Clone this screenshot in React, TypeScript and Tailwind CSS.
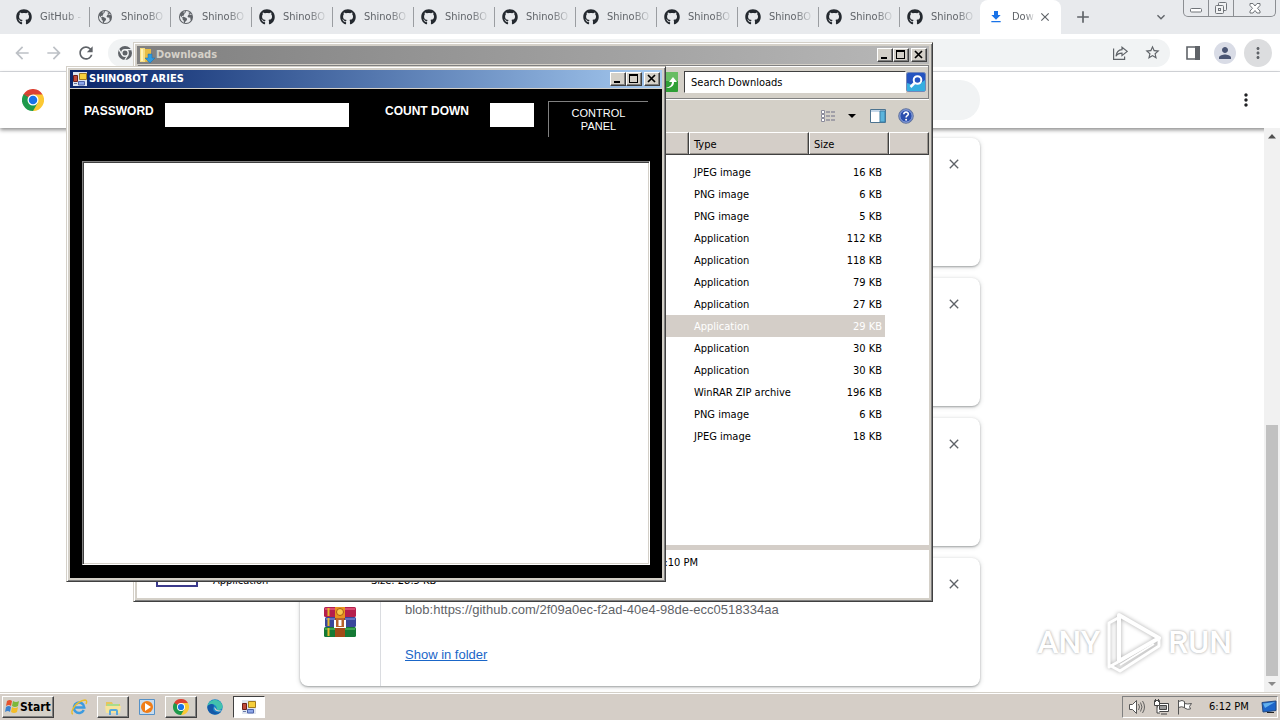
import type { ReactNode } from 'react'
import clsx from 'clsx'
import { FaGithub } from 'react-icons/fa'
import { IoEarth } from 'react-icons/io5'
import {
  MdAdd, MdArrowBack, MdArrowForward, MdClose, MdFileDownload, MdKeyboardArrowDown,
  MdMoreVert, MdPerson, MdRefresh, MdStarBorder,
} from 'react-icons/md'

const TABS = [
  { title: 'GitHub -', icon: 'github' },
  { title: 'ShinoBO', icon: 'globe' },
  { title: 'ShinoBO', icon: 'globe' },
  ...Array.from({ length: 9 }, () => ({ title: 'ShinoBO', icon: 'github' })),
]

const FILES = [
  { type: 'JPEG image', size: '16 KB' },
  { type: 'PNG image', size: '6 KB' },
  { type: 'PNG image', size: '5 KB' },
  { type: 'Application', size: '112 KB' },
  { type: 'Application', size: '118 KB' },
  { type: 'Application', size: '79 KB' },
  { type: 'Application', size: '27 KB' },
  { type: 'Application', size: '29 KB', selected: true },
  { type: 'Application', size: '30 KB' },
  { type: 'Application', size: '30 KB' },
  { type: 'WinRAR ZIP archive', size: '196 KB' },
  { type: 'PNG image', size: '6 KB' },
  { type: 'JPEG image', size: '18 KB' },
]

export default function App() {
  return (
    <div className="flex h-screen flex-col overflow-hidden bg-white font-['DejaVu_Sans_Condensed','Noto_Sans',sans-serif] text-[11px] text-black">
      <main className="relative flex min-h-0 flex-1 flex-col overflow-hidden">
        <Browser />
        <ExplorerWindow />
        <BotWindow />
        <Watermark />
      </main>
      <Taskbar />
    </div>
  )
}

/* ---------- browser ---------- */

const FADE = 'ml-2 whitespace-nowrap [mask-image:linear-gradient(to_right,#000_60%,rgba(0,0,0,0.15))]'

function Browser() {
  return (
    <>
      <div className="flex h-[34px] shrink-0 bg-[#e8eaed] pl-2 text-[#5f6368]">
        {TABS.map((tab, i) => (
          <button key={i} className={clsx('flex w-[81px] items-center pl-2', i > 0 && 'bg-[linear-gradient(#9a9da1,#9a9da1)] bg-[length:1px_20px] bg-left bg-no-repeat')}>
            {tab.icon === 'github' ? <FaGithub size={16} className="text-[#24292f]" /> : <IoEarth size={16} />}
            <span className={FADE}>{tab.title}</span>
          </button>
        ))}
        <button className="flex w-[81px] items-center rounded-t-lg bg-white pl-2">
          <MdFileDownload size={16} className="text-[#1a73e8]" />
          <span className={FADE}>Dow</span>
          <MdClose size={14} className="mr-[9px] ml-auto" />
        </button>
        <button aria-label="New tab" className="ml-3 flex items-center"><MdAdd size={20} /></button>
        <button aria-label="Search tabs" className="mr-[14px] ml-auto flex items-center"><MdKeyboardArrowDown size={16} /></button>
        <CaptionGlass />
      </div>

      <div className="flex h-[38px] shrink-0 items-center border-b border-[#dadce0] bg-white pr-2 text-[#5f6368]">
        <button aria-label="Back" className="ml-3 text-[#bdc1c6]"><MdArrowBack size={20} /></button>
        <button aria-label="Forward" className="ml-3 text-[#bdc1c6]"><MdArrowForward size={20} /></button>
        <button aria-label="Reload" className="ml-3"><MdRefresh size={20} /></button>
        <div className="ml-3 flex h-7 flex-1 items-center rounded-full bg-[#f1f3f4] px-[9px]">
          <svg viewBox="0 0 16 16" className="size-4">
            <circle cx="8" cy="8" r="7" fill="#5f6368" />
            <circle cx="8" cy="8" r="3.2" fill="#5f6368" stroke="#f1f3f4" strokeWidth="1.4" />
            <path d="M8 4.6h6.4M5 9.7 1.9 4.4M11 9.8 7.8 15" stroke="#f1f3f4" strokeWidth="1.2" />
          </svg>
          <button aria-label="Share" className="mr-4 ml-auto">
            <svg viewBox="0 0 16 16" className="size-4" fill="none" stroke="#5f6368" strokeWidth="1.2">
              <path d="M1.600 3.500v10.900h11v-3M10 2.200 15.200 6.400 10 10.600V8.200C7.500 8.200 5.300 9 4 11.200 4.400 7.600 6.200 4.900 10 4.600z" />
            </svg>
          </button>
          <button aria-label="Bookmark"><MdStarBorder size={17} /></button>
        </div>
        <button aria-label="Side panel" className="ml-4">
          <svg viewBox="0 0 14 14" className="size-[14px]"><path d="M1 1h12v12H1z" fill="#fff" stroke="#5f6368" strokeWidth="1.600" /><path d="M9 0h5v14H9z" fill="#5f6368" /></svg>
        </button>
        <button aria-label="Profile" className="ml-[14px] flex size-[22px] items-center justify-center rounded-full bg-[#d9dce6] text-[#4a5573]"><MdPerson size={18} /></button>
        <button aria-label="Menu" className="ml-2 flex size-7 items-center justify-center rounded-full bg-[#dcdddf]"><MdMoreVert size={18} /></button>
      </div>

      <div className="relative z-0 flex h-14 shrink-0 items-center bg-white shadow-[0_2px_4px_rgba(0,0,0,0.45)]">
        <ChromeLogo className="ml-[22px] size-[22px]" />
        <input aria-label="Search downloads" className="mx-auto h-10 w-[680px] rounded-full bg-[#f1f3f4] px-5 outline-none" />
        <button aria-label="More actions" className="mr-6 text-[#202124]"><MdMoreVert size={20} /></button>
      </div>

      <div className="flex min-h-0 flex-1 bg-white pl-4">
        <div className="flex flex-1 flex-col items-center gap-3 overflow-hidden pt-[10px]">
          <DownloadCard />
          <DownloadCard />
          <DownloadCard />
          <DownloadCard>
            <div className="flex w-[81px] shrink-0 justify-center border-r border-[#dadce0] pt-12"><WinRarIcon /></div>
            <div className="flex flex-col pt-11 pl-6 font-['Liberation_Sans',Arial,sans-serif] text-[13px] leading-4">
              <span className="text-[#5f6368]">blob:https://github.com/2f09a0ec-f2ad-40e4-98de-ecc0518334aa</span>
              <a href="#folder" className="mt-[29px] text-[#1a66c8] underline">Show in folder</a>
            </div>
          </DownloadCard>
        </div>
        <div className="relative z-0 flex w-4 flex-col items-center justify-between bg-[#f1f1f1]">
          <svg viewBox="0 0 16 16" className="size-4"><path d="M4 10.500 8 6l4 4.500z" fill="#505050" /></svg>
          <div className="mt-auto h-[251px] w-3 bg-[#c1c1c1]" />
          <svg viewBox="0 0 16 16" className="size-4"><path d="m4 6 4 4 4-4z" fill="#8a8a8a" /></svg>
        </div>
      </div>
    </>
  )
}

function DownloadCard({ children }: { children?: ReactNode }) {
  return (
    <article className="flex h-32 w-[680px] shrink-0 rounded-lg bg-white shadow-[0_1px_2px_rgba(60,64,67,0.4),0_1px_4px_1px_rgba(60,64,67,0.15)]">
      {children}
      <button aria-label="Remove" className="mt-[18px] mr-[18px] ml-auto size-4 text-[#5f6368]"><MdClose size={16} /></button>
    </article>
  )
}

function CaptionGlass() {
  return (
    <div className="mr-1 flex h-[17px] w-[93px] rounded-b-[5px] border border-t-0 border-[#8b8e92]">
      <button aria-label="Minimize" className="flex-1 border-r border-[#8b8e92]">
        <svg viewBox="0 0 24 16" className="h-4 w-full" fill="#fff" stroke="#707479"><rect x="6.500" y="8.500" width="11" height="3.500" rx="1" /></svg>
      </button>
      <button aria-label="Restore" className="flex-1 border-r border-[#8b8e92]">
        <svg viewBox="0 0 24 16" className="h-4 w-full" fill="#f1f2f3" stroke="#707479"><rect x="9.500" y="2.500" width="8" height="8" rx="1" /><rect x="6.500" y="5.500" width="8" height="8" rx="1" /><rect x="9.500" y="8.500" width="2" height="2" /></svg>
      </button>
      <button aria-label="Close" className="w-[41px]">
        <svg viewBox="0 0 40 16" className="h-4 w-full" fill="#fff" stroke="#707479"><path d="M15.500 3.500h3l2 2.500 2-2.500h3v2l-2.500 2.800 2.500 2.700v2h-3l-2-2.500-2 2.500h-3v-2L18 8.300l-2.500-2.800z" /></svg>
      </button>
    </div>
  )
}

/* ---------- classic windows ---------- */

const FRAME = 'absolute flex flex-col border border-t-[#d4d0c8] border-l-[#d4d0c8] border-r-[#404040] border-b-[#404040] bg-[#d4d0c8] p-[3px] shadow-[inset_1px_1px_0_#fff,inset_-1px_-1px_0_#808080]'
const RAISED = 'border border-t-white border-l-white border-r-[#404040] border-b-[#404040] bg-[#d4d0c8] shadow-[inset_-1px_-1px_0_#808080]'

function CaptionButtons() {
  return (
    <div className="ml-auto flex pr-[2px]">
      <button aria-label="Minimize" className={clsx(RAISED, 'h-[14px] w-4')}>
        <svg viewBox="0 0 14 12" className="h-3 w-[14px]"><path d="M3 8h6v2H3z" /></svg>
      </button>
      <button aria-label="Maximize" className={clsx(RAISED, 'h-[14px] w-4')}>
        <svg viewBox="0 0 14 12" className="h-3 w-[14px]"><path d="M2 1h9v9H2zM3 3v6h7V3z" fillRule="evenodd" /></svg>
      </button>
      <button aria-label="Close" className={clsx(RAISED, 'ml-[2px] h-[14px] w-4')}>
        <svg viewBox="0 0 14 12" className="h-3 w-[14px]"><path d="m3 2 7 7M10 2 3 9" stroke="#000" strokeWidth="1.700" /></svg>
      </button>
    </div>
  )
}

function ExplorerWindow() {
  return (
    <section className={clsx(FRAME, 'top-[42px] left-[133px] h-[560px] w-[800px]')}>
      <div className="mb-px flex h-[18px] shrink-0 items-center bg-linear-to-r from-[#808080] to-[#b8b8b8] pl-[2px] text-[#d4d0c8]">
        <svg viewBox="0 0 16 16" className="size-4">
          <path d="M1 1h5v14H1z" fill="#f6dd83" /><path d="M6 2h6v12l-6 1z" fill="#e8bd45" /><path d="M2 2h2v12H2z" fill="#fff3b8" />
          <path d="M9 7h4v4h3l-5 5-5-5h3z" fill="#2f9be0" stroke="#1b6fae" strokeWidth=".5" />
        </svg>
        <h2 className="ml-px pt-px font-bold">Downloads</h2>
        <CaptionButtons />
      </div>

      <div className="flex h-[34px] shrink-0 items-center justify-end border border-t-[#808080] border-r-[#808080] border-b-[#808080] border-l-white pr-[2px] shadow-[inset_0_1px_0_#fff,0_1px_0_#fff]">
        <button aria-label="Go" className="mr-[6px]">
          <svg viewBox="0 0 20 20" className="size-5"><rect width="20" height="20" rx="1" fill="#2f9f36" /><path d="M0 0h20v9H0z" fill="#68bd63" /><path d="M8 16c4-1 6-3 6-6h-3l4-5 4 5h-3c0 4-3 6-8 6z" fill="#fff" /></svg>
        </button>
        <input type="text" aria-label="Search Downloads" defaultValue="Search Downloads" className="h-[22px] w-[222px] border border-t-[#404040] border-l-[#404040] border-r-white border-b-white bg-white pt-px pl-[6px] outline-none" />
        <button aria-label="Search">
          <svg viewBox="0 0 20 20" className="size-5">
            <rect x=".5" y=".5" width="19" height="19" rx="2" fill="#2554c0" stroke="#7387b8" /><path d="M1 11q9 4 18-3v11H1z" fill="#37aee0" />
            <circle cx="11.500" cy="8" r="3.800" fill="none" stroke="#fff" strokeWidth="2" /><path d="m8.500 11-4 4" stroke="#fff" strokeWidth="2.500" />
          </svg>
        </button>
      </div>

      <div className="flex h-[33px] shrink-0 items-center justify-end pr-[15px]">
        <button aria-label="Change view" className="flex items-center">
          <svg viewBox="0 0 16 14" className="h-[14px] w-4" fill="none">
            <path d="M1.500 1.500h3v3h-3zM1.500 5.500h3v3h-3zM1.500 9.500h3v3h-3z" fill="#fff" stroke="#8b8b9b" /><path d="M6 3h4m1 0h4M6 7h4m1 0h4M6 11h4m1 0h4" stroke="#6e6e86" />
          </svg>
          <svg viewBox="0 0 8 4" className="ml-3 h-1 w-2"><path d="M0 0h8L4 4z" /></svg>
        </button>
        <button aria-label="Preview pane" className="ml-[14px]">
          <svg viewBox="0 0 16 14" className="h-[14px] w-4"><path d="M.5.500h15v13H.500z" fill="#fff" stroke="#4c7390" /><path d="M1 1h14v2H1z" fill="#c5d7e8" /><path d="M10 2h5v11h-5z" fill="#5bb4dc" stroke="#3d7fa5" /></svg>
        </button>
        <button aria-label="Help" className="ml-3">
          <svg viewBox="0 0 16 16" className="size-4">
            <circle cx="8" cy="8" r="7.300" fill="#2b4fae" stroke="#6d7d9f" /><circle cx="8" cy="8" r="6.200" fill="none" stroke="#b9c8ec" strokeWidth=".8" />
            <path d="M5.800 6.300C5.800 3.200 10.400 3.400 10.300 6.200 10.200 7.700 8.100 7.700 8.100 9.500" fill="none" stroke="#fff" strokeWidth="1.600" /><circle cx="8.100" cy="11.800" r="1" fill="#fff" />
          </svg>
        </button>
      </div>

      <div className="flex-1 bg-white">
        <table className="w-full table-fixed border-separate border-spacing-0">
          <thead>
            <tr className="h-[23px] text-left">
              <HeaderCell />
              <HeaderCell label="Type" className="w-[120px]" />
              <HeaderCell label="Size" className="w-20" />
              <HeaderCell className="w-10" />
            </tr>
          </thead>
          <tbody className="before:block before:h-[6px] before:content-['']">
            {FILES.map((file, i) => (
              <tr key={i} className={clsx('h-[22px]', file.selected && 'text-white')}>
                <td className={clsx(file.selected && 'bg-[#d4cec8]')} />
                <td className={clsx('pt-[2px] pl-[5px]', file.selected && 'bg-[#d4cec8]')}>{file.type}</td>
                <td className={clsx('border-r-4 border-white pt-[2px] pr-[3px] text-right', file.selected && 'bg-[#d4cec8]')}>{file.size}</td>
                <td />
              </tr>
            ))}
          </tbody>
        </table>
      </div>

      <div className="flex h-[53px] shrink-0 border-t-[5px] border-[#d4cec8] bg-white pl-[19px] leading-[14px]">
        <div className="h-[37px] w-[42px] border-2 border-[#3b3a8c]" />
        <span className="mt-6 ml-[15px] w-[158px]">Application</span>
        <span className="mt-6 w-[200px]">Size: 28.5 KB</span>
        <time className="mt-[6px] w-[127px] text-right">6:10 PM</time>
      </div>
    </section>
  )
}

function HeaderCell({ label, className }: { label?: string; className?: string }) {
  return (
    <th className={clsx('border-t border-r border-b border-t-white border-r-[#404040] border-b-[#404040] bg-[#d4cec8] pt-[3px] pl-[5px] font-normal shadow-[inset_1px_0_0_#fff,inset_-1px_-1px_0_#9a958f]', className)}>{label}</th>
  )
}

function BotWindow() {
  return (
    <section className={clsx(FRAME, 'top-[66px] left-[66px] h-[516px] w-[600px]')}>
      <div className="flex h-[18px] shrink-0 items-center bg-linear-to-r from-[#0a246a] to-[#a6caf0] pl-[3px] text-white">
        <FormIcon className="size-[14px]" />
        <h2 className="ml-[2px] pt-px font-bold">SHINOBOT ARIES</h2>
        <CaptionButtons />
      </div>
      <div className="mt-px flex min-h-0 flex-1 flex-col bg-black px-3 pb-[13px] font-['Liberation_Sans',Arial,sans-serif] text-xs text-white">
        <form className="flex h-[72px] shrink-0 items-start pt-3 pl-[2px]">
          <label htmlFor="password" className="mt-[2px] w-[81px] font-bold">PASSWORD</label>
          <input id="password" type="password" className="mt-[2px] h-6 w-[184px] bg-white px-1 text-black outline-none" />
          <label htmlFor="countdown" className="mt-[2px] ml-9 w-[105px] font-bold">COUNT DOWN</label>
          <input id="countdown" type="text" className="mt-[2px] h-6 w-11 bg-white px-1 text-black outline-none" />
          <button type="button" className="ml-[14px] h-9 w-[100px] border-t border-l border-[#808080] px-5 text-[11px] leading-[13px]">CONTROL PANEL</button>
        </form>
        <textarea aria-label="Log" className="min-h-0 flex-1 resize-none border border-t-[#808080] border-l-[#808080] border-r-white border-b-white bg-white p-1 text-black shadow-[inset_1px_1px_0_#404040,inset_-1px_-1px_0_#d4d0c8] outline-none" />
      </div>
    </section>
  )
}

/* ---------- taskbar ---------- */

function Taskbar() {
  return (
    <footer className="flex h-7 shrink-0 items-center border-t border-[#d4d0c8] bg-[#d5cec7] px-[2px] pt-px shadow-[inset_0_1px_0_#fff]">
      <button className={clsx(RAISED, 'flex h-[22px] w-[52px] items-center pl-px font-bold')}>
        <svg viewBox="0 0 16 16" className="size-4">
          <path d="M3 2q3-2 5 0L7 7Q5 5 2 7z" fill="#e5532d" /><path d="M9 2q3 2 6 0l-1 5q-3 2-6 0z" fill="#7db83a" />
          <path d="M2 8q3-2 5 0l-1 5Q4 11 1 13z" fill="#3b82cf" /><path d="M8 8q3 2 6 0l-1 5q-3 2-6 0z" fill="#f4bd27" />
        </svg>
        <span className="text-xs">Start</span>
      </button>
      <nav className="ml-[9px] flex items-center">
        <TaskButton label="Internet Explorer">
          <svg viewBox="0 0 18 18" className="size-[18px]" fill="none">
            <path d="M13.800 12A5.200 5.200 0 1 1 14.300 9.600H5" stroke="#3c9be0" strokeWidth="2.500" /><path d="M3 16C-1 15 6 3 15 2c2 0 2 2 1 4" stroke="#e9bd2c" strokeWidth="1.400" />
          </svg>
        </TaskButton>
        <TaskButton label="Explorer" raised>
          <svg viewBox="0 0 18 16" className="h-4 w-[18px]">
            <path d="M2 3h6l1 2h7v9H2z" fill="#e6c65b" /><path d="M3 5h12v5H3z" fill="#a9dc8c" /><path d="M1 7h16l-1 7H2z" fill="#f6e49a" />
            <path d="M5 16v-4q0-2 2-2h5q2 0 2 2v4h-2v-4H7v4z" fill="#58a9dc" />
          </svg>
        </TaskButton>
        <TaskButton label="Media Player">
          <svg viewBox="0 0 16 16" className="size-4"><path d="M.5.500h15v15H.500z" fill="#c8dcee" stroke="#5591c7" /><circle cx="8" cy="8" r="6" fill="#f07d17" /><path d="m6 4 6 4-6 4z" fill="#fff" /></svg>
        </TaskButton>
        <TaskButton label="Chrome" raised><ChromeLogo className="size-4" /></TaskButton>
        <TaskButton label="Edge">
          <svg viewBox="0 0 16 16" className="size-4">
            <circle cx="8" cy="8" r="7.700" fill="#1685c9" /><path d="M.5 7C2-1 14-1 15.500 7c.3 3-3 5-6 3.500C11 7 6 3 .5 7z" fill="#42c2ad" />
            <path d="M1 6.500C6 3 8 6 6.300 8.500 5 12 9 15 14 12.500 11 17 1 17 .3 8z" fill="#1559a8" /><path d="M7.500 8c-.8 3 2.500 5.500 7 4 .5-1-3 0-5-1.500z" fill="#d5cec7" />
          </svg>
        </TaskButton>
        <TaskButton label="Shinobot Aries" active><FormIcon className="size-[14px]" /></TaskButton>
      </nav>
      <div className="ml-auto flex h-[22px] w-[156px] items-center border border-t-[#808080] border-l-[#808080] border-r-white border-b-white pl-[5px]">
        <svg viewBox="0 0 18 16" className="h-4 w-[18px]" fill="#fff" stroke="#555"><path d="M1.500 5.500h3l4-4v13l-4-4h-3z" /><path d="M10.500 5q2 3 0 6M12.500 3.500q3 4.500 0 9M14.500 2q4 6 0 12" fill="none" strokeWidth=".9" /></svg>
        <svg viewBox="0 0 16 16" className="ml-[7px] size-4" fill="#fff" stroke="#444"><path d="M4.500 4.500h11v8h-11z" /><path d="M6.500 6.500h7v4h-7z" fill="#999" /><path d="M8 15h6M1.500 1.500h5v5h-5zM4 7v7h3M2.500 0v3M5.500 0v3" /></svg>
        <svg viewBox="0 0 16 16" className="ml-2 size-4" fill="#fff" stroke="#555"><path d="M1.500 1v14.500M1.500 2.500q4-2 6 0v6q-3-1.500-6 0zM7.500 4.500q3 1 7 0l-2 3 1 2.500q-3 1-6-1z" /></svg>
        <time className="ml-4 pt-px">6:12 PM</time>
        <svg viewBox="0 0 16 14" className="ml-auto h-[14px] w-4"><path d="M1 2.500 15 1v9.500L2 12z" fill="#1d65c9" stroke="#234b84" /><path d="m2 3.500 12-1.500-10 6z" fill="#64b1ee" /><path d="M6 12.500h7" stroke="#222" /></svg>
      </div>
    </footer>
  )
}

function TaskButton({ label, raised, active, children }: { label: string; raised?: boolean; active?: boolean; children: ReactNode }) {
  return (
    <button aria-label={label} className={clsx('mr-[2px] flex h-[22px] w-8 items-center justify-center', raised && RAISED, active && 'border border-t-[#404040] border-l-[#404040] border-r-white border-b-white bg-white')}>
      {children}
    </button>
  )
}

/* ---------- drawings ---------- */

function ChromeLogo({ className }: { className: string }) {
  return (
    <svg viewBox="0 0 48 48" className={className}>
      <path d="M24 24 3.200 12A24 24 0 0 1 44.800 12z" fill="#dd4132" />
      <path d="M24 24 44.800 12A24 24 0 0 1 24 48z" fill="#fcc934" />
      <path d="M24 24v24A24 24 0 0 1 3.200 12z" fill="#1e9a4b" />
      <path d="M24 12h20.800L34.400 30z" fill="#fcc934" /><path d="M34.400 30 24 48 13.600 30z" fill="#1e9a4b" /><path d="M13.600 30 3.200 12 24 12z" fill="#1e9a4b" />
      <path d="M24 12H3.200L24 24z" fill="#dd4132" /><path d="M13.600 30 3.200 12l14 8z" fill="#1e9a4b" />
      <circle cx="24" cy="24" r="12" fill="#fff" /><circle cx="24" cy="24" r="9.300" fill="#1a73e8" />
    </svg>
  )
}

function FormIcon({ className }: { className: string }) {
  return (
    <svg viewBox="0 0 14 14" className={className}>
      <path d="M0 0h14v14H0z" fill="#dfe5ef" />
      <path d="M.5 3.500h4v6h-4z" fill="#c04a3a" stroke="#6c1f1a" /><path d="M6.500 1.500h7v6h-7z" fill="#f6cf3c" stroke="#a27b1f" />
      <path d="M5.500 9.500h6v3.500h-6z" fill="#8ca6e8" stroke="#4d62a8" /><path d="M1 11.500h3" stroke="#6678a8" />
    </svg>
  )
}

function WinRarIcon() {
  return (
    <svg viewBox="0 0 32 32" className="size-8">
      <rect y="1" width="32" height="10" rx="1.500" fill="#b51f4c" /><path d="M1 3h30" stroke="#e65b7c" strokeWidth="1.500" />
      <rect x="1" y="11" width="31" height="10" rx="1.500" fill="#39479b" /><path d="M2 13h29" stroke="#7080cf" strokeWidth="1.500" />
      <rect y="21" width="32" height="10" rx="1.500" fill="#157a35" /><path d="M1 23h30" stroke="#4cb45a" strokeWidth="1.500" />
      <path d="M4.500 2v8M4.500 12v8M4.500 22v8" stroke="#e8b82c" strokeWidth="2" />
      <path d="M11 1h10v30H11z" fill="#a24b18" /><path d="M11 1h10v11H11z" fill="#e8941f" />
      <circle cx="16" cy="6" r="3.500" fill="#f7c84a" stroke="#a85b12" /><path d="M10 14h12v8H10z" fill="#fff" /><path d="M12 12h8v9h-8z" fill="#b7622c" /><path d="M14.500 14h3v6h-3z" fill="#fff" />
    </svg>
  )
}

function Watermark() {
  return (
    <div className="pointer-events-none absolute right-12 bottom-[18px] flex items-center font-['Roboto',sans-serif] text-[32px] font-medium text-white [text-shadow:0_0_3px_#999]">
      <span>ANY</span>
      <svg viewBox="0 0 60 64" className="mx-1 h-16 w-[60px] drop-shadow-[0_0_2px_#aaa]" fill="none" stroke="#fff" strokeWidth="4" strokeLinejoin="round">
        <path d="M15 5 55 28 15 51z" /><path d="M14 8 5 13v44l9-5M7 56l9 5 39-25V28" strokeWidth="3" /><path d="m16 55 34-21" strokeWidth="2" />
      </svg>
      <span>RUN</span>
    </div>
  )
}
